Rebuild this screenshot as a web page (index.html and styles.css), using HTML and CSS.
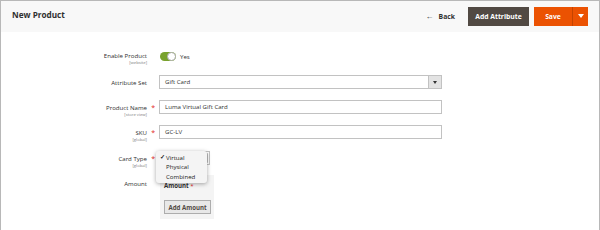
FILE: index.html
```html
<!DOCTYPE html>
<html>
<head>
<meta charset="utf-8">
<link rel="stylesheet" href="styles.css">
</head>
<body>
<div class="frame">
  <header class="page-head">
    <h1 class="title">New Product</h1>
    <div class="actions">
      <a class="back"><span class="arrow">&#8592;</span>Back</a>
      <button class="btn-dark">Add Attribute</button>
      <div class="save">
        <span class="save-label">Save</span>
        <span class="save-split"><svg width="6" height="4" viewBox="0 0 6 4"><path d="M0 0h6L3 4z" fill="#fff"/></svg></span>
      </div>
    </div>
  </header>
  <main class="form">
    <div class="row r1">
      <div class="label"><span>Enable Product</span><small>[website]</small></div>
      <div class="control toggle-wrap"><span class="toggle"><span class="knob"></span></span><span class="yes">Yes</span></div>
    </div>
    <div class="row r2">
      <div class="label"><span>Attribute Set</span></div>
      <div class="control"><div class="select">Gift Card<span class="sel-btn"><svg width="4" height="3" viewBox="0 0 4 3"><path d="M0 0h4L2 3z" fill="#333"/></svg></span></div></div>
    </div>
    <div class="row r3">
      <div class="label req"><span>Product Name</span><small>[store view]</small></div>
      <div class="control"><div class="input">Luma Virtual Gift Card</div></div>
    </div>
    <div class="row r4">
      <div class="label req"><span>SKU</span><small>[global]</small></div>
      <div class="control"><div class="input">GC-LV</div></div>
    </div>
    <div class="row r5">
      <div class="label req"><span>Card Type</span><small>[global]</small></div>
      <div class="control">
        <div class="mini-select"><span class="scroll"></span></div>
        <ul class="popup">
          <li class="checked"><span class="check">&#10003;</span>Virtual</li>
          <li>Physical</li>
          <li>Combined</li>
        </ul>
      </div>
    </div>
    <div class="row r6">
      <div class="label"><span>Amount</span></div>
      <div class="control">
        <div class="amount-box">
          <div class="amount-title">Amount <b class="star">*</b></div>
          <button class="btn-light">Add Amount</button>
        </div>
      </div>
    </div>
  </main>
</div>
</body>
</html>
```
FILE: styles.css
```css
* { box-sizing: border-box; }
html, body { margin: 0; padding: 0; background: #fff; }
body { font-family: "Open Sans", "Liberation Sans", sans-serif; color: #303030; }
.frame {
  width: 600px; height: 230px;
  border: 1px solid #b8b8b8; border-bottom: none;
  overflow: hidden;
}
.page-head {
  height: 31px;
  background: #f8f8f8;
  display: flex; align-items: center; justify-content: space-between;
  padding: 0 11px 0 11px;
}
.title { margin: 0; font-size: 8.2px; font-weight: 700; color: #303030; margin-top: -5px; }
.actions { display: flex; align-items: center; margin-top: -1px; }
.back { font-size: 6.8px; font-weight: 700; color: #303030; display: flex; align-items: center; margin-right: 13px; }
.back .arrow { font-size: 8px; margin-right: 5px; font-weight: 700; line-height: 8px; margin-top: -1px; }
.btn-dark {
  height: 19px; width: 61px; padding: 0;
  background: #514943; color: #fff; border: none;
  font-family: inherit; font-size: 6.8px; font-weight: 700;
  margin-right: 5px;
}
.save { display: flex; height: 19px; width: 54px; background: #eb5202; color: #fff; font-size: 6.8px; font-weight: 700; align-items: center; }
.save-label { width: 38px; text-align: center; }
.save-split { flex: 1; height: 100%; border-left: 1px solid #c44400; display: flex; align-items: center; justify-content: center; }
.form { padding-top: 17px; }
.row { display: grid; grid-template-columns: 146px 283px; column-gap: 12px; }
.r1 { height: 27px; }
.r2 { height: 25px; }
.r3 { height: 25px; }
.r4 { height: 26px; }
.r5 { height: 25px; }
.label { display: flex; flex-direction: column; align-items: flex-end; font-size: 6.1px; color: #303030; line-height: 8px; position: relative; padding-top: 3px; }
.label span { color: #303030; }
.label small { font-size: 4.2px; color: #808080; line-height: 6px; }
.label.req::after { content: "*"; position: absolute; right: -8px; top: 3px; color: #e22626; font-size: 7px; }
.control { position: relative; }
.toggle-wrap { display: flex; align-items: center; height: 10px; margin-top: 2px; }
.toggle { width: 16px; height: 9px; border-radius: 5px; background: #79a22e; position: relative; margin-left: 1px; }
.knob { position: absolute; right: 0; top: 0; width: 9px; height: 9px; border-radius: 50%; background: #fff; border: 1px solid #adadad; }
.yes { font-size: 6.1px; margin-left: 4px; }
.select, .input {
  height: 14px; width: 283px;
  border: 1px solid #c2c2c2; background: #fff;
  font-size: 6.1px; line-height: 12px; padding-left: 5px;
  position: relative; color: #303030;
}
.select { margin-top: -1px; }
.input { margin-top: -1px; }
.sel-btn { position: absolute; right: 0; top: 0; width: 13px; height: 12px; background: #e3e3e3; border-left: 1px solid #c2c2c2; display: flex; align-items: center; justify-content: center; }
.mini-select { width: 51px; height: 14px; border: 1px solid #c2c2c2; background: #fff; margin-top: -1px; position: relative; }
.scroll { position: absolute; right: 1px; top: 1px; width: 3px; height: 10px; background: #bdbdbd; border-radius: 1px; }
.popup {
  position: absolute; left: -3px; top: -1px; z-index: 2;
  margin: 0; padding: 2px 0 2px 0; list-style: none;
  width: 51px; background: #f4f4f4;
  border-radius: 3px;
  box-shadow: 0 1px 4px rgba(0,0,0,0.35);
  font-size: 6.1px; line-height: 9.3px; color: #222;
}
.popup li { padding-left: 10px; position: relative; }
.popup .check { position: absolute; left: 4px; font-size: 6px; font-weight: 700; }
.amount-box { width: 54px; height: 44px; background: #f4f4f4; margin-left: 1px; margin-top: -2px; padding: 7px 0 0 4px; }
.amount-title { font-size: 6.1px; font-weight: 700; color: #303030; line-height: 8px; }
.star { color: #e22626; font-weight: 400; }
.btn-light {
  margin-top: 10px; width: 47px; height: 14px; padding: 0;
  background: #e8e8e8; border: 1px solid #adadad;
  font-family: inherit; font-size: 6.1px; font-weight: 700; color: #514943;
}
```
